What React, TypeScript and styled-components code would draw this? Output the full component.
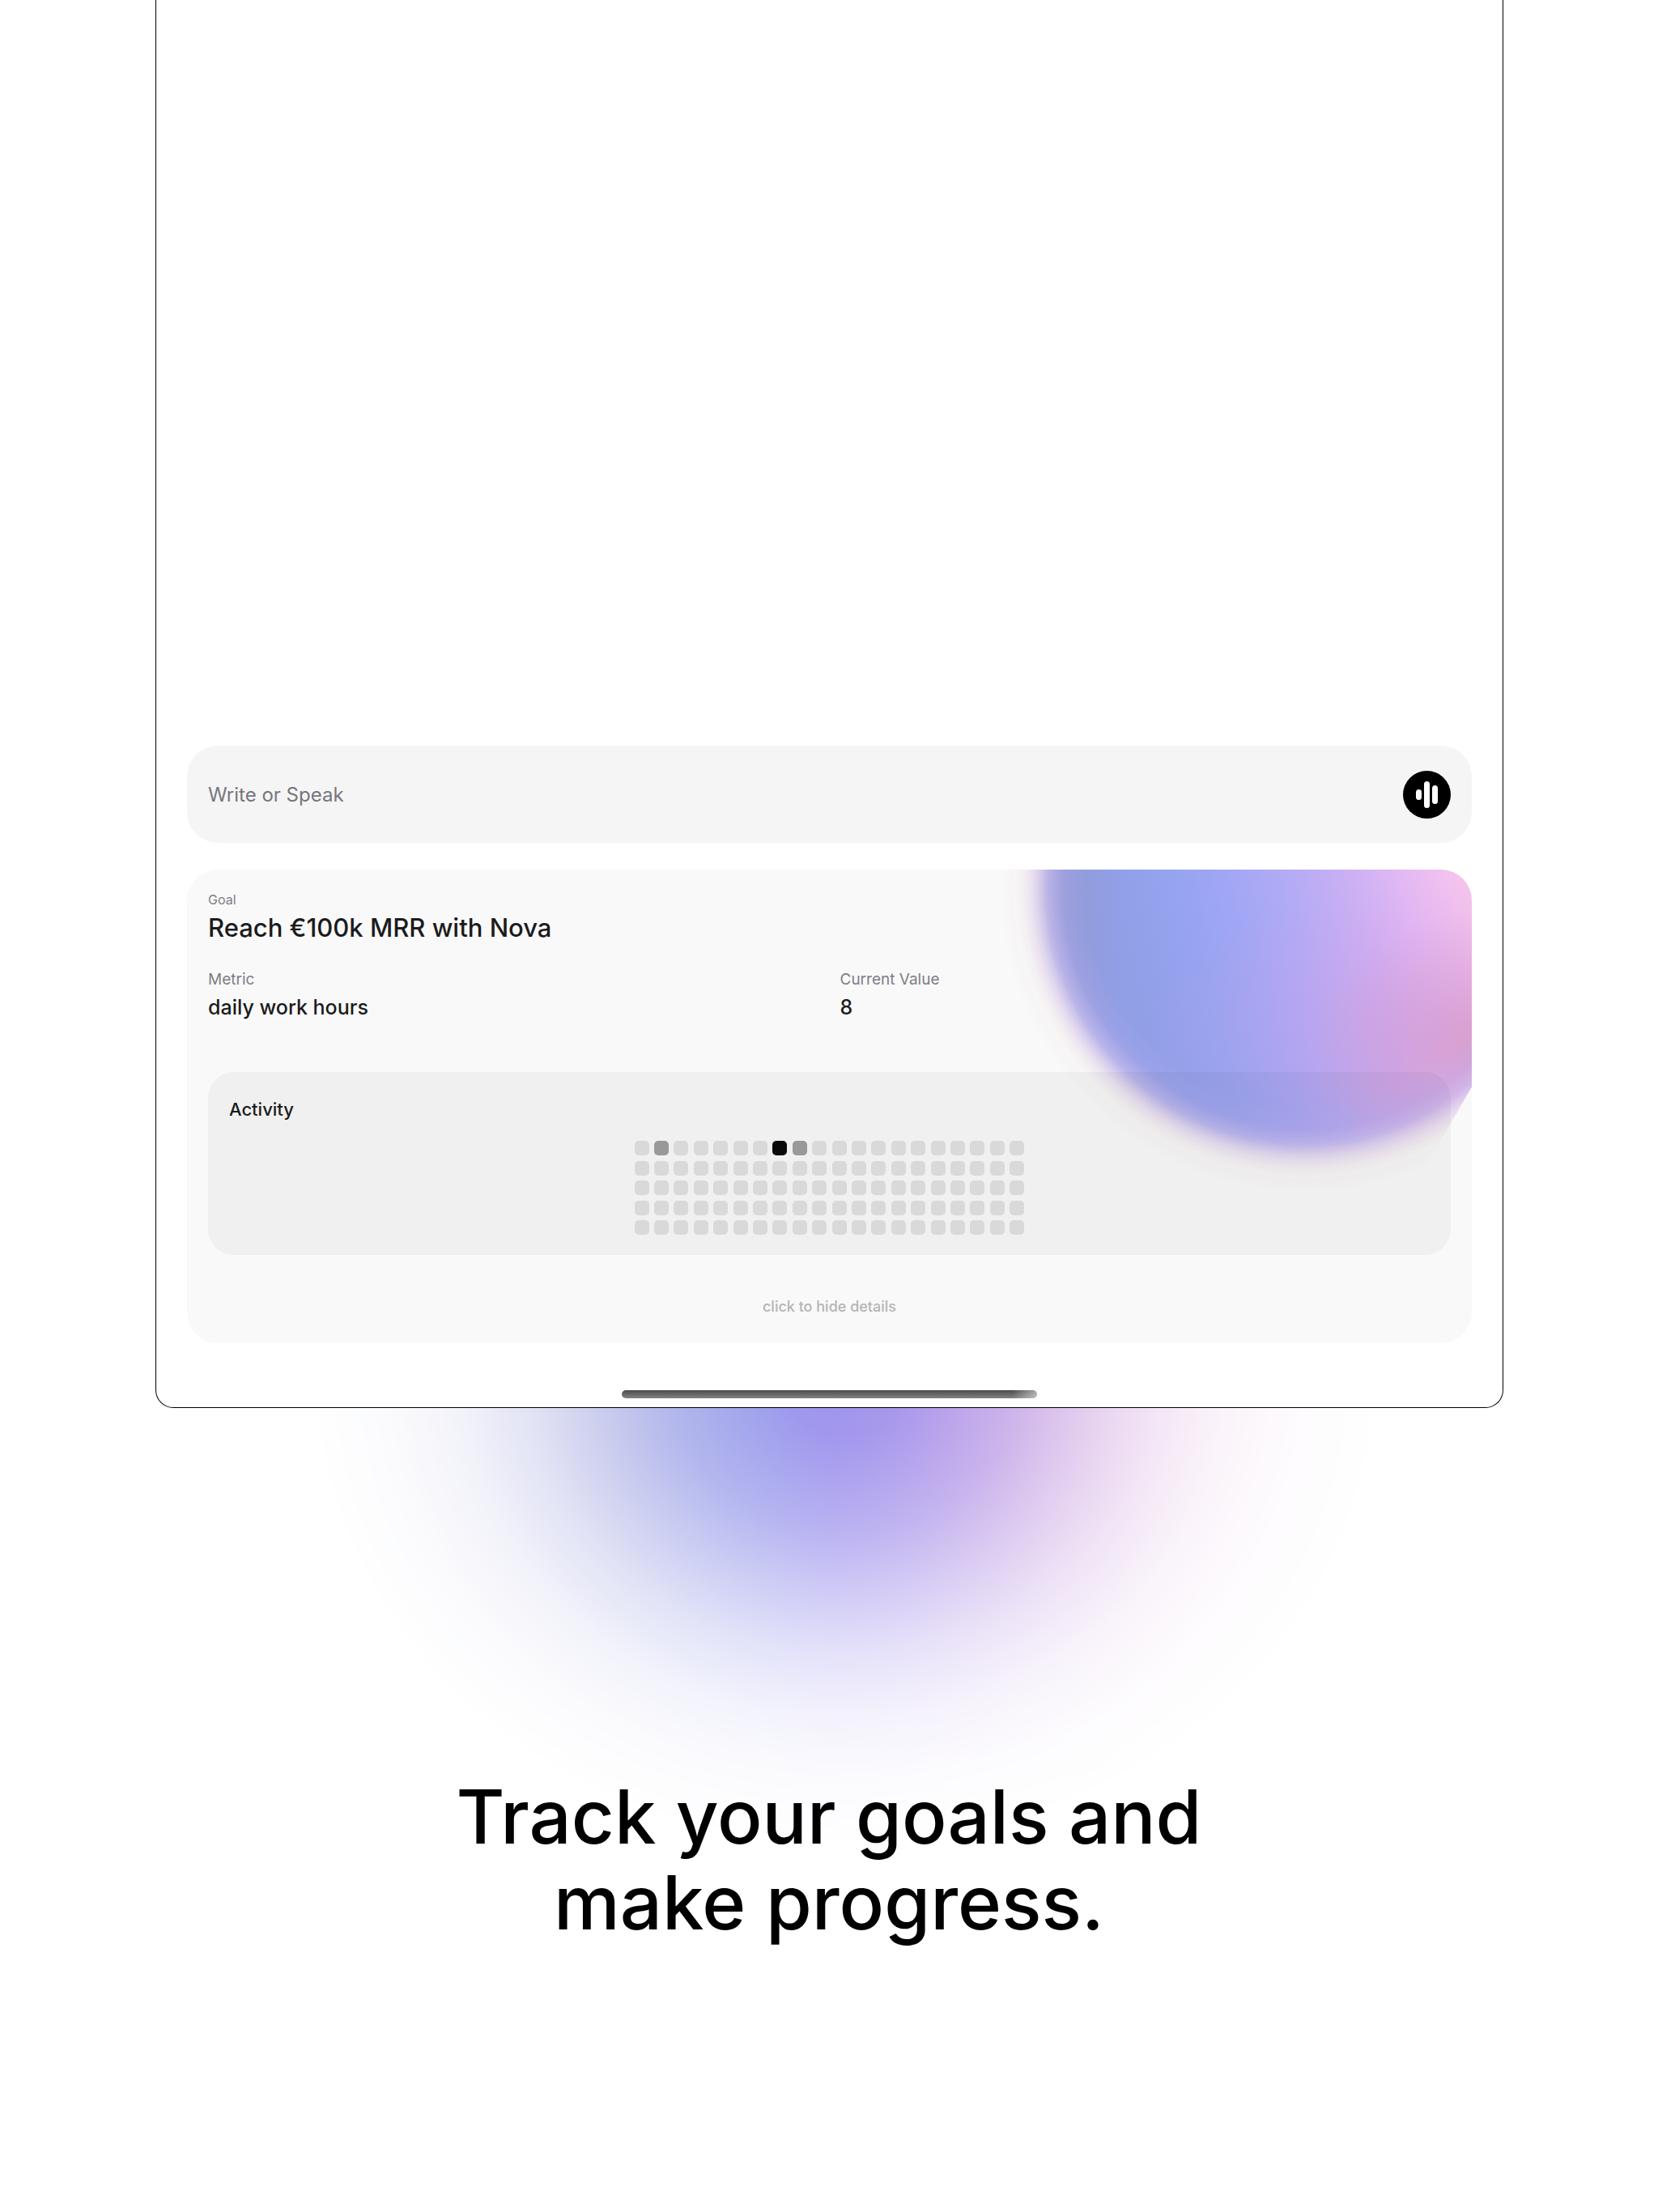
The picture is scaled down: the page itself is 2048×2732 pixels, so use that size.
import React, { useState } from 'react';
import styled, { createGlobalStyle } from 'styled-components';

const GlobalStyle = createGlobalStyle`
  *, *::before, *::after { box-sizing: border-box; }
  body {
    margin: 0;
    background: #fff;
    color: #1b1b1d;
    font-family: Inter, Roboto, 'Liberation Sans', sans-serif;
    -webkit-font-smoothing: antialiased;
  }
`;

const Page = styled.main`
  position: relative;
  isolation: isolate;
  overflow: hidden;
  min-height: 100vh;
  display: flex;
  flex-direction: column;
`;

const Device = styled.section`
  flex: 1;
  display: flex;
  flex-direction: column;
  justify-content: flex-end;
  gap: 33px;
  margin: 0 191px 0 192px;
  padding: 0 38px 11px;
  border: 1px solid #000;
  border-top: 0;
  border-radius: 0 0 22px 22px;
  background: #fff;
`;

const Composer = styled.form`
  display: flex;
  align-items: center;
  gap: 26px;
  height: 120px;
  padding: 0 26px;
  border-radius: 38px;
  background: #f5f5f5;
`;

const Prompt = styled.input`
  flex: 1;
  min-width: 0;
  padding: 2px 0 0;
  border: 0;
  outline: 0;
  background: transparent;
  color: #1b1b1d;
  font: 400 24px/32px Inter, sans-serif;
  &::placeholder {
    color: #77757e;
    opacity: 1;
  }
`;

const VoiceButton = styled.button`
  display: flex;
  width: 59px;
  height: 59px;
  padding: 0;
  border: 0;
  border-radius: 50%;
  background: #000;
  cursor: pointer;
`;

const Card = styled.article`
  position: relative;
  isolation: isolate;
  overflow: hidden;
  display: flex;
  flex-direction: column;
  padding: 24px 26px 30px;
  border-radius: 38px;
  background: #f9f9f9;
`;

const Orb = styled.div`
  position: absolute;
  z-index: -1;
  top: -359px;
  right: -174px;
  width: 760px;
  height: 760px;
  clip-path: polygon(0 0, 100% 0, 100% 43%, 67% 100%, 0 100%);
  background:
    radial-gradient(circle, rgba(186, 172, 240, 0) 270px, rgba(186, 172, 240, 0.25) 296px, rgba(192, 176, 236, 0.6) 316px, rgba(222, 202, 232, 0.9) 336px, #f0e3e4 354px),
    radial-gradient(240px 170px at 620px 580px, rgba(206, 150, 180, 0.6), rgba(206, 150, 190, 0.3) 45%, rgba(206, 150, 200, 0) 100%),
    radial-gradient(420px 190px at 600px 560px, rgba(216, 150, 222, 0.5), rgba(216, 150, 222, 0.22) 50%, rgba(216, 150, 222, 0) 100%),
    radial-gradient(100px 260px at 55px 400px, rgba(150, 152, 200, 0.6), rgba(150, 152, 200, 0) 100%),
    linear-gradient(76deg, #8f9de0 18%, #92a0ea 27%, #97a4f0 34%, #a3a7f5 41%, #b3abf5 48%, #cbb0f4 56%, #e2b9f4 63%, #f2c2ef 69%, #f8c8ea 74%);
  mask-image: radial-gradient(circle, #000 300px, rgba(0, 0, 0, 0.86) 320px, rgba(0, 0, 0, 0.5) 338px, rgba(0, 0, 0, 0.16) 358px, transparent 378px);
`;

const Label = styled.p<{ $small?: boolean }>`
  margin: 0;
  color: #7f7d86;
  font-size: ${({ $small }) => ($small ? 16 : 19)}px;
  line-height: ${({ $small }) => ($small ? 26 : 28)}px;
`;

const GoalTitle = styled.h2`
  margin: 0 0 28px;
  font-size: 31px;
  font-weight: 500;
  line-height: 44px;
`;

const Facts = styled.div`
  display: grid;
  grid-template-columns: 1fr 1fr;
  gap: 26px;
`;

const Value = styled.p`
  margin: 0;
  font-size: 25px;
  font-weight: 500;
  line-height: 40px;
`;

const Activity = styled.section`
  display: flex;
  flex-direction: column;
  align-items: center;
  gap: 19px;
  margin: 60px 0 49px;
  padding: 26px 26px 25px;
  border-radius: 32px;
  background: rgba(0, 0, 0, 0.036);
`;

const ActivityTitle = styled.h3`
  align-self: flex-start;
  margin: 0;
  font-size: 22px;
  font-weight: 500;
  line-height: 40px;
`;

const Heatmap = styled.div`
  display: grid;
  grid-template-columns: repeat(20, 18px);
  grid-auto-rows: 18px;
  justify-content: space-between;
  align-content: space-between;
  width: 482px;
  height: 116px;
`;

const tones = ['#d9d9d9', '#999', '#09090b'];

const Day = styled.span<{ $level: number }>`
  border-radius: 5px;
  background: ${({ $level }) => tones[$level]};
`;

const DetailsToggle = styled.button`
  align-self: center;
  padding: 0;
  border: 0;
  background: none;
  color: #b4b4b6;
  font: 500 18px/30px Inter, sans-serif;
  cursor: pointer;
`;

const HomeBar = styled.div`
  align-self: center;
  width: 513px;
  height: 10px;
  margin-top: 25px;
  border-radius: 5px;
  background:
    linear-gradient(90deg, transparent 94%, rgba(255, 255, 255, 0.5)),
    linear-gradient(#4b4b4b, #828282);
`;

const Caption = styled.section`
  position: relative;
  z-index: -1;
  padding: 452px 32px 329px;
`;

const Glow = styled.div`
  position: absolute;
  z-index: -1;
  top: -639px;
  left: calc(50% - 660px);
  width: 1360px;
  height: 1200px;
  background: linear-gradient(90deg, #9496d2 10%, #9498dc 28%, #959be6 36%, #9999ec 43%, #9f95ed 49%, #aa96eb 56%, #b998e4 64%, #c99dde 72%, #dfaadc 84%);
  mask-image: radial-gradient(
    closest-side,
    #000 0, rgba(0, 0, 0, 0.98) 12%, rgba(0, 0, 0, 0.88) 20%, rgba(0, 0, 0, 0.72) 32%,
    rgba(0, 0, 0, 0.5) 44%, rgba(0, 0, 0, 0.28) 57%, rgba(0, 0, 0, 0.12) 70%,
    rgba(0, 0, 0, 0.04) 83%, transparent 98%
  );
`;

const Headline = styled.h1`
  margin: 0;
  color: #000;
  font-size: 92px;
  font-weight: 500;
  line-height: 106px;
  text-align: center;
`;

const levels: Record<number, number> = { 1: 1, 7: 2, 8: 1 };
const days = Array.from({ length: 100 }, (_, i) => levels[i] ?? 0);

function VoiceIcon() {
  return (
    <svg width="59" height="59" viewBox="0 0 59 59" fill="#fff" aria-hidden="true">
      <rect x="16" y="23" width="7" height="13" rx="3.5" />
      <rect x="26" y="13" width="7" height="33" rx="3.5" />
      <rect x="36" y="18" width="7" height="23" rx="3.5" />
    </svg>
  );
}

export default function App() {
  const [open, setOpen] = useState(true);
  return (
    <>
      <GlobalStyle />
      <Page>
        <Device>
          <Composer onSubmit={(e) => e.preventDefault()}>
            <Prompt aria-label="Write or Speak" placeholder="Write or Speak" />
            <VoiceButton type="button" aria-label="Speak">
              <VoiceIcon />
            </VoiceButton>
          </Composer>
          <Card>
            <Orb />
            <Label $small>Goal</Label>
            <GoalTitle>Reach €100k MRR with Nova</GoalTitle>
            <Facts>
              <div>
                <Label>Metric</Label>
                <Value>daily work hours</Value>
              </div>
              <div>
                <Label>Current Value</Label>
                <Value>8</Value>
              </div>
            </Facts>
            {open && (
              <Activity>
                <ActivityTitle>Activity</ActivityTitle>
                <Heatmap>
                  {days.map((level, i) => (
                    <Day key={i} $level={level} />
                  ))}
                </Heatmap>
              </Activity>
            )}
            <DetailsToggle type="button" onClick={() => setOpen(!open)}>
              {open ? 'click to hide details' : 'click to show details'}
            </DetailsToggle>
          </Card>
          <HomeBar />
        </Device>
        <Caption>
          <Glow />
          <Headline>
            Track your goals and
            <br />
            make progress.
          </Headline>
        </Caption>
      </Page>
    </>
  );
}
